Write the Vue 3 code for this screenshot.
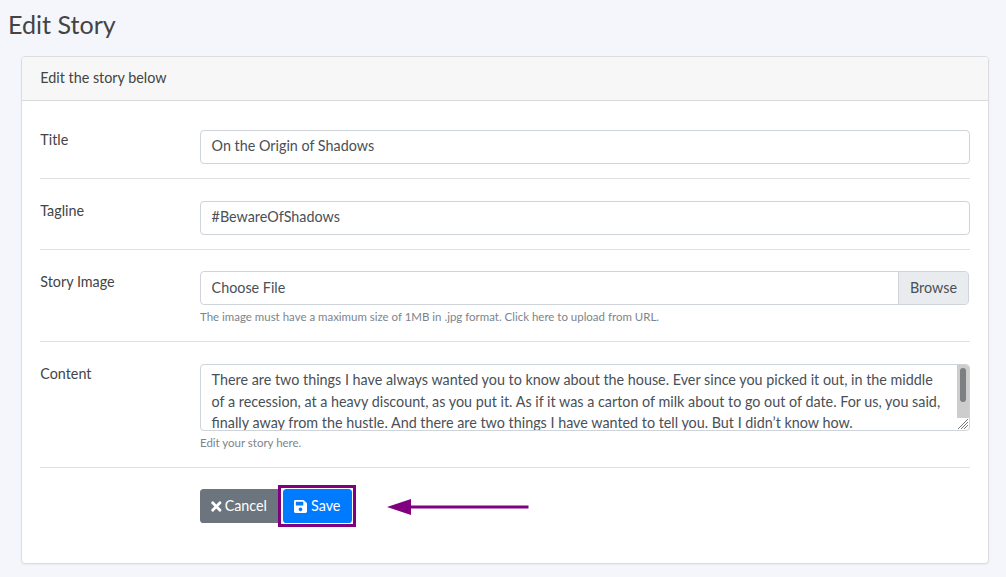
<script setup>
const story = {
  title: 'On the Origin of Shadows',
  tagline: '#BewareOfShadows',
  lines: [
    'There are two things I have always wanted you to know about the house. Ever since you picked it out, in the middle',
    'of a recession, at a heavy discount, as you put it. As if it was a carton of milk about to go out of date. For us, you said,',
    'finally away from the hustle. And there are two things I have wanted to tell you. But I didn’t know how.',
  ],
}
</script>

<template>
  <main class="page">
    <h1>Edit Story</h1>
    <section class="card">
      <header>Edit the story below</header>
      <form class="body" @submit.prevent>
        <div class="row title-row">
          <label>Title</label>
          <div class="control">{{ story.title }}</div>
        </div>
        <div class="row tagline-row">
          <label>Tagline</label>
          <div class="control">{{ story.tagline }}</div>
        </div>
        <div class="row image-row">
          <label>Story Image</label>
          <div class="field">
            <div class="control file"><span>Choose File</span><span class="browse">Browse</span></div>
            <small>The image must have a maximum size of 1MB in .jpg format. Click here to upload from URL.</small>
          </div>
        </div>
        <div class="row content-row">
          <label>Content</label>
          <div class="field">
            <div class="control area">
              <div v-for="line in story.lines" :key="line" class="line">{{ line }}</div>
              <div class="scroll"><i></i></div>
              <svg class="grip" width="12" height="12" viewBox="0 0 12 12">
                <path d="M1 11 11 1M4 11 11 4M7 11 11 7" fill="none" stroke="#777" stroke-width="1" />
              </svg>
            </div>
            <small>Edit your story here.</small>
          </div>
        </div>
        <div class="actions">
          <button class="btn cancel" type="button">
            <svg class="x" viewBox="0 0 352 512"><path fill="currentColor" d="M242.72 256l100.07-100.07c12.28-12.28 12.28-32.19 0-44.48l-22.24-22.24c-12.28-12.28-32.19-12.28-44.48 0L176 189.28 75.93 89.21c-12.28-12.28-32.19-12.28-44.48 0L9.21 111.45c-12.28 12.28-12.28 32.19 0 44.48L109.28 256 9.21 356.07c-12.28 12.28-12.28 32.19 0 44.48l22.24 22.24c12.28 12.28 32.2 12.28 44.48 0L176 322.72l100.07 100.07c12.28 12.28 32.2 12.28 44.48 0l22.24-22.24c12.28-12.28 12.28-32.19 0-44.48L242.72 256z" /></svg>
            <span>Cancel</span>
          </button>
          <div class="highlight">
            <button class="btn save" type="button">
              <svg class="disk" viewBox="0 0 448 512"><path fill="currentColor" d="M433.941 129.941l-83.882-83.882A48 48 0 0 0 316.118 32H48C21.49 32 0 53.49 0 80v352c0 26.51 21.49 48 48 48h352c26.51 0 48-21.49 48-48V163.882a48 48 0 0 0-14.059-33.941zM224 416c-35.346 0-64-28.654-64-64s28.654-64 64-64 64 28.654 64 64-28.654 64-64 64zm96-304.52V212c0 6.627-5.373 12-12 12H76c-6.627 0-12-5.373-12-12V108c0-6.627 5.373-12 12-12h228.52c3.183 0 6.235 1.264 8.485 3.515l3.48 3.48A11.996 11.996 0 0 1 320 111.48z" /></svg>
              <span>Save</span>
            </button>
          </div>
          <svg class="arrow" width="142" height="18" viewBox="0 0 142 18">
            <path d="M0 9 24 1V17Z" fill="purple" />
            <path d="M23 9H141.5" stroke="purple" stroke-width="3" />
          </svg>
        </div>
      </form>
    </section>
  </main>
</template>

<style>
body { background: #f4f6fb; }
</style>

<style scoped>
* { box-sizing: border-box; }
.page {
  height: 577px;
  overflow: hidden;
  padding: 8px 17px 0 21px;
  background: #f4f6fb;
  color: #495057;
  font: 14.33px/21.6px Lato, "Liberation Sans", sans-serif;
}
h1 { margin: 0 0 16px -13px; font-size: 25.1px; line-height: 32px; font-weight: 400; color: #444; }
.card {
  width: 968px;
  height: 508px;
  border: 1px solid #dcdddf;
  border-radius: 4px;
  background: #fff;
  box-shadow: 0 1px 2px rgba(0, 0, 0, .05);
}
header {
  height: 44px;
  padding: 10px 18.3px;
  border-bottom: 1px solid #d8d9da;
  border-radius: 3px 3px 0 0;
  background: #f7f7f7;
  color: #444;
}
.body { padding: 0 18px; }
.row { display: grid; grid-template-columns: 160px 770px; align-items: start; border-bottom: 1px solid #dedfe0; }
.title-row { height: 78px; padding-top: 29px; }
.tagline-row { height: 71px; padding-top: 22px; }
.image-row { height: 92px; padding-top: 21px; }
.content-row { height: 126px; padding-top: 22px; }
label { padding-left: .3px; color: #444; }
.title-row label, .tagline-row label, .content-row label { line-height: 20px; }
.control { height: 34px; padding: 4px 10.6px; border: 1px solid #ced4da; border-radius: 4px; background: #fff; white-space: nowrap; }
.file { display: flex; justify-content: space-between; width: 769px; padding-top: 5px; padding-right: 0; overflow: hidden; }
.browse { margin: -5px 0; width: 70px; padding: 5px 11px; border-left: 1px solid #ced4da; background: #e9ecef; }
.area { position: relative; height: 67px; overflow: hidden; }
.line { height: 21.6px; }
small { display: block; margin-top: 3px; font-size: 11.47px; line-height: 18px; color: #7c848b; }
.scroll { position: absolute; top: 0; right: 0; width: 12px; height: 53px; padding: 3px; background: #cdcdcd; }
.scroll i { display: block; width: 6px; height: 34px; border-radius: 3px; background: #7c8080; }
.grip { position: absolute; right: 0; bottom: 0; }
.actions { display: flex; align-items: flex-start; padding: 17px 0 0 160px; }
.btn { display: flex; align-items: center; height: 34px; padding: 0 11px; border: 0; border-radius: 3.6px; color: #fff; font: inherit; }
.cancel { width: 78px; margin-top: 4px; border-radius: 3.6px 0 0 3.6px; background: #6c757d; }
.save { width: 69px; background: #007bff; }
.x { width: 11px; height: 15px; margin-right: 3px; }
.disk { width: 13px; height: 15px; margin-right: 4px; }
.highlight { width: 78px; height: 42px; padding: 1px 2px; border: 3px solid purple; }
.arrow { margin: 13px 0 0 31px; }
</style>
